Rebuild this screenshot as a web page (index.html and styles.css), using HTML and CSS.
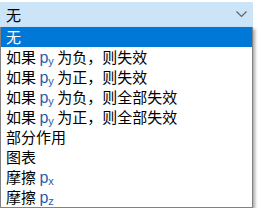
FILE: index.html
```html
<!DOCTYPE html>
<html lang="zh-CN">
<head>
    <meta charset="UTF-8">
    <title>Dropdown</title>
    <link rel="stylesheet" href="styles.css">
</head>
<body>

<div class="combo">
    <!-- closed select -->
    <div class="combo-box">
        <span>无</span>
        <svg class="chevron" width="11" height="6" viewBox="0 0 11 6">
            <polyline points="0.5,0.5 5.5,5.5 10.5,0.5" fill="none" stroke="#606060" stroke-width="1.1"/>
        </svg>
    </div>

    <!-- open list -->
    <ul class="combo-list">
        <li class="selected">无</li>
        <li>如果 <span class="sym">p<sub>y</sub></span> 为负，则失效</li>
        <li>如果 <span class="sym">p<sub>y</sub></span> 为正，则失效</li>
        <li>如果 <span class="sym">p<sub>y</sub></span> 为负，则全部失效</li>
        <li>如果 <span class="sym">p<sub>y</sub></span> 为正，则全部失效</li>
        <li>部分作用</li>
        <li>图表</li>
        <li>摩擦 <span class="sym">p<sub>x</sub></span></li>
        <li>摩擦 <span class="sym">p<sub>z</sub></span></li>
    </ul>
</div>

</body>
</html>
```

FILE: styles.css
```css
body {
    margin: 0;
    padding: 0;
    background-color: #ffffff;
    font-family: "Noto Sans CJK SC", "Noto Sans", sans-serif;
    font-size: 15px;
    color: #000000;
}
.combo {
    width: 253px;
    padding-top: 2px;
}
.combo-box {
    height: 25px;
    background-color: #cce4f7;
    display: flex;
    align-items: center;
    justify-content: space-between;
    padding: 0 6px 0 6px;
    line-height: 20px;
}
.chevron {
    display: block;
    margin-top: -2px;
}
.combo-list {
    list-style: none;
    margin: 0;
    padding: 0;
    border: 1px solid #828282;
    border-top: none;
    box-shadow: 2px 2px 3px rgba(0, 0, 0, 0.35);
    background-color: #ffffff;
}
.combo-list li {
    height: 20px;
    line-height: 20px;
    padding-left: 5px;
    white-space: nowrap;
}
.combo-list li.selected {
    background-color: #0078d7;
    color: #ffffff;
}
.sym {
    font-family: "Liberation Sans", sans-serif;
    color: #2a5cb0;
    font-size: 16px;
}
.sym sub {
    font-size: 11px;
    vertical-align: -2px;
    line-height: 0;
}
```
